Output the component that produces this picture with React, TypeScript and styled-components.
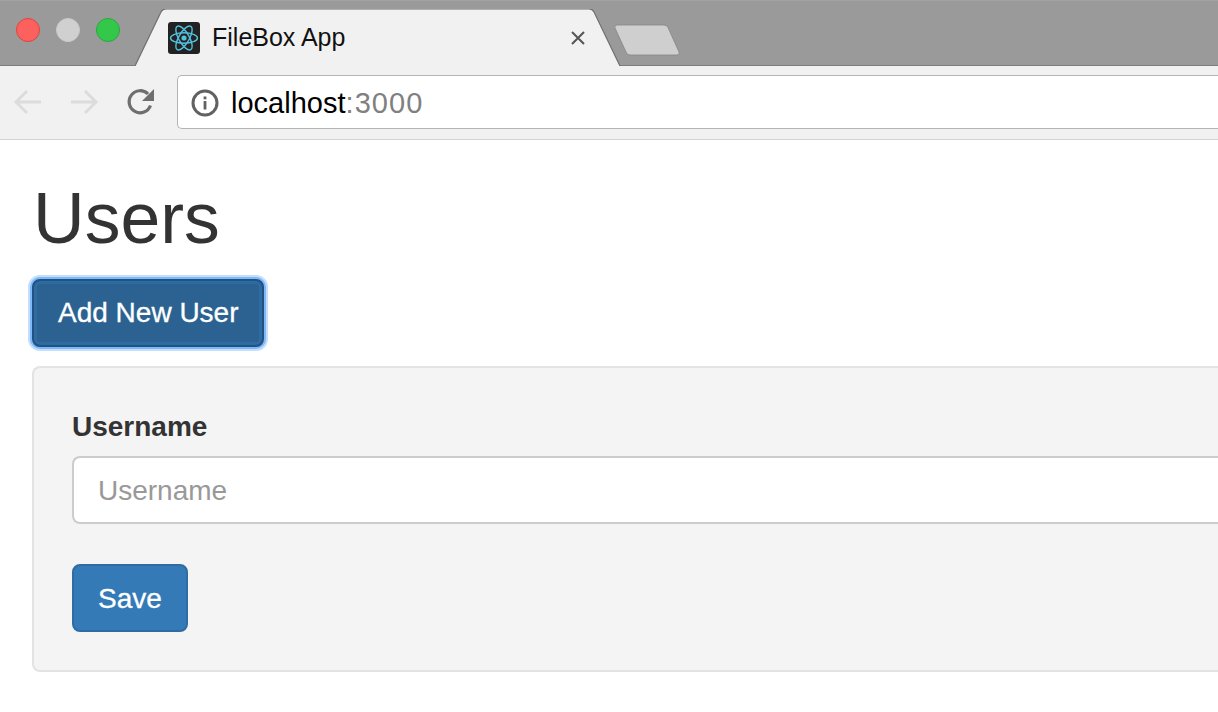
import React from "react";
import styled, { createGlobalStyle } from "styled-components";

const GlobalStyle = createGlobalStyle`
  html, body {
    margin: 0;
    height: 100%;
    overflow: hidden;
    background: #fff;
    font-family: "Liberation Sans", Arial, sans-serif;
  }
  * { box-sizing: border-box; }
`;

const Page = styled.div`
  width: 1218px;
  height: 712px;
`;

/* browser chrome */
const TabStrip = styled.div`
  height: 66px;
  display: flex;
  align-items: flex-start;
  background: #9a9a9a;
  border-top: 1px solid #a2a2a2;
  border-bottom: 1px solid #7c7c7c;
`;

const Lights = styled.div`
  width: 135px;
  flex: none;
  display: flex;
  gap: 16px;
  padding: 17px 0 0 16px;
`;

const Light = styled.span<{ $fill: string; $edge: string }>`
  width: 24px;
  height: 24px;
  border-radius: 50%;
  background: ${(p) => p.$fill};
  border: 1px solid ${(p) => p.$edge};
`;

const Tab = styled.div`
  position: relative;
  width: 486px;
  height: 57px;
  margin-top: 8px;
  flex: none;
  display: flex;
  align-items: center;
  padding: 0 35px 0 33px;
`;

const TabShape = styled.svg`
  position: absolute;
  left: 0;
  top: 0;
`;

const Favicon = styled.svg`
  position: relative;
  flex: none;
`;

const TabTitle = styled.span`
  position: relative;
  flex: 1;
  margin-left: 12px;
  font-size: 25px;
  color: #111;
`;

const TabClose = styled.svg`
  position: relative;
  flex: none;
`;

const NewTab = styled.svg`
  flex: none;
  margin: 23px 0 0 -7px;
`;

const Toolbar = styled.div`
  height: 74px;
  display: flex;
  align-items: center;
  padding: 0 0 1px 13px;
  background: #f1f1f1;
  border-bottom: 1px solid #d3d3d3;
`;

const NavIcon = styled.svg<{ $gap: number }>`
  flex: none;
  margin-right: ${(p) => p.$gap}px;
`;

const Omnibox = styled.div`
  flex: 1;
  height: 54px;
  display: flex;
  align-items: center;
  gap: 12px;
  padding: 2px 0 0 13px;
  background: #fff;
  border: 1px solid #b4b4b4;
  border-right: none;
  border-radius: 5px 0 0 5px;
  font-size: 29px;
`;

const Host = styled.span`
  color: #000;
`;

const Port = styled.span`
  color: #808080;
  letter-spacing: 1.1px;
`;

/* page content */
const Content = styled.main`
  padding-left: 32px;
`;

const Title = styled.h1`
  margin: 39px 0 0 1px;
  font-size: 71.5px;
  font-weight: 400;
  line-height: 79px;
  color: #333;
`;

const Button = styled.button<{ $focused?: boolean }>`
  display: block;
  height: 68px;
  padding: 0 24px;
  font-family: inherit;
  font-size: 28px;
  color: #fff;
  -webkit-text-stroke: 0.3px #fff;
  border-radius: 8px;
  border: 2px solid ${(p) => (p.$focused ? "#22527f" : "#2e6da4")};
  background: ${(p) => (p.$focused ? "#2b6291" : "#337ab7")};
  ${(p) =>
    p.$focused &&
    `box-shadow: inset 0 0 0 3px #2f6ba3, 0 0 0 2px #7db8fb, 0 0 0 4px #c4defc;`}
`;

const AddButton = styled(Button)`
  margin-top: 21px;
  padding-right: 23px;
`;

const SaveButton = styled(Button)`
  margin-top: 40px;
  padding-top: 1px;
`;

const Well = styled.form`
  margin-top: 19px;
  height: 306px;
  padding: 41px 0 0 38px;
  background: #f4f4f4;
  border: 2px solid #e3e3e3;
  border-right: none;
  border-radius: 8px 0 0 8px;
`;

const Label = styled.label`
  display: block;
  font-size: 28px;
  font-weight: 700;
  line-height: 35px;
  color: #333;
`;

const Input = styled.input`
  display: block;
  width: 100%;
  height: 68px;
  margin-top: 12px;
  padding: 2px 24px 0;
  font-family: inherit;
  font-size: 28px;
  background: #fff;
  border: 2px solid #cccccc;
  border-right: none;
  border-radius: 8px 0 0 8px;
  outline: none;

  &::placeholder {
    color: #999;
    opacity: 1;
  }
`;

export default function App() {
  return (
    <Page>
      <GlobalStyle />
      <TabStrip>
        <Lights>
          <Light $fill="#fc615d" $edge="#e0443e" />
          <Light $fill="#d0d0d0" $edge="#c8c8c8" />
          <Light $fill="#34c84a" $edge="#2aa83c" />
        </Lights>
        <Tab>
          <TabShape width="486" height="57" viewBox="0 0 486 57">
            <path
              d="M0 57 L26 3 Q27.5 0 31 0 L454 0 Q457.5 0 459 3 L485 57 Z"
              fill="#f1f1f1"
            />
            <path
              d="M0 57 L26 3 Q27.5 0 31 0 L454 0 Q457.5 0 459 3 L485 57"
              fill="none"
              stroke="#707070"
              strokeWidth="1.2"
            />
          </TabShape>
          <Favicon width="32" height="32" viewBox="0 0 32 32">
            <rect width="32" height="32" rx="3" fill="#222" />
            <g fill="none" stroke="#53c1de" strokeWidth="1.4">
              <ellipse cx="16" cy="16" rx="13.5" ry="5.2" />
              <ellipse cx="16" cy="16" rx="13.5" ry="5.2" transform="rotate(60 16 16)" />
              <ellipse cx="16" cy="16" rx="13.5" ry="5.2" transform="rotate(120 16 16)" />
            </g>
            <circle cx="16" cy="16" r="2.6" fill="#53c1de" />
          </Favicon>
          <TabTitle>FileBox App</TabTitle>
          <TabClose width="16" height="16" viewBox="0 0 16 16">
            <path d="M2 2 L14 14 M14 2 L2 14" stroke="#555" strokeWidth="2" />
          </TabClose>
        </Tab>
        <NewTab width="68" height="34" viewBox="0 0 68 34">
          <path
            d="M3 1 L50 1 Q53 1 54 3.5 L65 28 Q66 31 63 31 L16 31 Q13 31 12 28 L1 4 Q0 1 3 1 Z"
            fill="#cfcfcf"
            stroke="#858585"
            strokeWidth="0.8"
          />
        </NewTab>
      </TabStrip>
      <Toolbar>
        <NavIcon $gap={26} width="30" height="28" viewBox="0 0 30 28">
          <path d="M28 14 H4 M14 3 L3 14 L14 25" fill="none" stroke="#dcdcdc" strokeWidth="3" />
        </NavIcon>
        <NavIcon $gap={27} width="30" height="28" viewBox="0 0 30 28">
          <path d="M2 14 H26 M16 3 L27 14 L16 25" fill="none" stroke="#dcdcdc" strokeWidth="3" />
        </NavIcon>
        <NavIcon $gap={21} width="30" height="30" viewBox="0 0 30 30">
          <path d="M24.5 18.5 A11 11 0 1 1 22 7" fill="none" stroke="#6e6e6e" strokeWidth="3.2" />
          <path d="M28 2 V14 H16 Z" fill="#6e6e6e" />
        </NavIcon>
        <Omnibox>
          <svg width="28" height="28" viewBox="0 0 28 28">
            <circle cx="14" cy="14" r="12" fill="none" stroke="#616161" strokeWidth="3" />
            <rect x="12.6" y="12" width="2.8" height="8.5" fill="#616161" />
            <rect x="12.6" y="7.5" width="2.8" height="2.8" fill="#616161" />
          </svg>
          <span>
            <Host>localhost</Host>
            <Port>:3000</Port>
          </span>
        </Omnibox>
      </Toolbar>
      <Content>
        <Title>Users</Title>
        <AddButton type="button" $focused>
          Add New User
        </AddButton>
        <Well>
          <Label htmlFor="username">Username</Label>
          <Input id="username" placeholder="Username" />
          <SaveButton type="button">Save</SaveButton>
        </Well>
      </Content>
    </Page>
  );
}
